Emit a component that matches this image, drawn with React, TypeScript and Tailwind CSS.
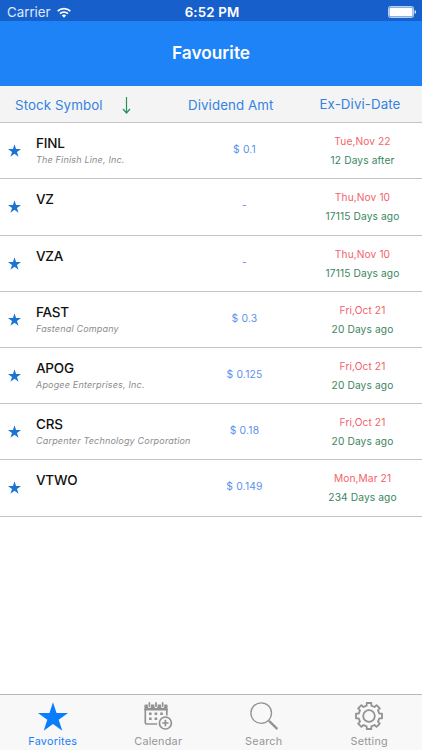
import type { ReactNode } from "react";

type Stock = {
  symbol: string;
  company?: string;
  amount: string;
  date: string;
  days: string;
};

const stocks: Stock[] = [
  { symbol: "FINL", company: "The Finish Line, Inc.", amount: "$ 0.1", date: "Tue,Nov 22", days: "12 Days after" },
  { symbol: "VZ", amount: "-", date: "Thu,Nov 10", days: "17115 Days ago" },
  { symbol: "VZA", amount: "-", date: "Thu,Nov 10", days: "17115 Days ago" },
  { symbol: "FAST", company: "Fastenal Company", amount: "$ 0.3", date: "Fri,Oct 21", days: "20 Days ago" },
  { symbol: "APOG", company: "Apogee Enterprises, Inc.", amount: "$ 0.125", date: "Fri,Oct 21", days: "20 Days ago" },
  { symbol: "CRS", company: "Carpenter Technology Corporation", amount: "$ 0.18", date: "Fri,Oct 21", days: "20 Days ago" },
  { symbol: "VTWO", amount: "$ 0.149", date: "Mon,Mar 21", days: "234 Days ago" },
];

function StarIcon({ className }: { className?: string }) {
  return (
    <svg viewBox="0 0 30 28.6" className={className} fill="currentColor">
      <path d="M15 0l3.54 10.9H30l-9.27 6.74 3.54 10.9L15 21.8l-9.27 6.74 3.54-10.9L0 10.9h11.46z" />
    </svg>
  );
}

function CalendarIcon() {
  return (
    <svg viewBox="0 0 30 30" className="h-[30px] w-[30px]" fill="none">
      <path d="M1.4 9.4V4.8q0-1.2 1.2-1.2h20.8q1.2 0 1.2 1.2v4.6z" fill="#929292" />
      <path d="M6.4 2.4v3M13 2.4v3M19.6 2.4v3" stroke="#f8f8f8" strokeWidth="3.2" strokeLinecap="round" />
      <path d="M6.4 1.8v3.4M13 1.8v3.4M19.6 1.8v3.4" stroke="#929292" strokeWidth="1.7" strokeLinecap="round" />
      <path d="M2.3 8v13.8q0 1.2 1.2 1.2h10.7M23.8 8v6.4" stroke="#929292" strokeWidth="1.7" />
      <path
        d="M6 12.8h2.6M11.6 12.8h2.6M17.2 12.8h2.6M6 17.8h2.6M11.6 17.8h2.6"
        stroke="#929292"
        strokeWidth="2.6"
      />
      <circle cx="22.4" cy="22" r="6" stroke="#929292" strokeWidth="1.7" fill="#f8f8f8" />
      <path d="M22.4 18.8v6.4M19.2 22h6.4" stroke="#929292" strokeWidth="1.7" />
    </svg>
  );
}

function SearchIcon() {
  return (
    <svg viewBox="0 0 30 30" className="h-[30px] w-[30px]" fill="none" stroke="#929292">
      <circle cx="12.2" cy="12.1" r="10.3" strokeWidth="1.3" />
      <path d="M19.5 19.4l1.6 1.6" strokeWidth="1.3" />
      <path d="M20.8 20.7l6.9 6.7" strokeWidth="2.4" strokeLinecap="round" />
    </svg>
  );
}

// One gear tooth spans 45 degrees; the outline is the same profile turned eight times.
const gearPoints = Array.from({ length: 8 }, (_, i) =>
  [
    [-13, 10.6],
    [-10, 13.2],
    [10, 13.2],
    [13, 10.6],
  ]
    .map(([deg, r]) => {
      const a = ((i * 45 + deg) * Math.PI) / 180;
      return `${(15 + r * Math.sin(a)).toFixed(2)},${(15 - r * Math.cos(a)).toFixed(2)}`;
    })
    .join(" ")
).join(" ");

function GearIcon() {
  return (
    <svg viewBox="0 0 30 30" className="h-[30px] w-[30px]" fill="none" stroke="#929292" strokeWidth="1.8">
      <polygon points={gearPoints} strokeLinejoin="round" />
      <circle cx="15" cy="15" r="5.8" />
    </svg>
  );
}

function StatusBar() {
  return (
    <div className="flex h-[21px] items-center bg-[#1760cc] text-[13.3px] text-white">
      <div className="flex flex-1 items-center pt-[3px] pl-[7px]">
        <span className="leading-[18px] text-[#dce9fb]">Carrier</span>
        <svg viewBox="0 0 14 11" className="ml-[6px] h-[11px] w-[14px]" fill="none" stroke="white" strokeWidth="1.8">
          <path d="M.7 4.1a9 9 0 0 1 12.6 0M3 6.7a5.8 5.8 0 0 1 8 0" />
          <path d="M7 10.7L4.8 8.5a3.2 3.2 0 0 1 4.4 0z" fill="white" stroke="none" />
        </svg>
      </div>
      <span className="pt-[3px] pl-px text-[13.3px] leading-[18px] font-semibold tracking-[0.15px]">6:52 PM</span>
      <div className="flex flex-1 justify-end pt-[3px] pr-[6px]">
        <svg viewBox="0 0 28 12" className="h-[12px] w-[28px]" fill="white">
          <rect x=".5" y=".5" width="25" height="11" rx="1.8" fill="none" stroke="#b7d0f5" />
          <rect x="1.4" y="1.4" width="23.2" height="9.2" rx="1" />
          <path d="M26.7 4q1.3.5 1.3 2t-1.3 2z" />
        </svg>
      </div>
    </div>
  );
}

function StockRow({ stock }: { stock: Stock }) {
  return (
    <li className="flex h-[56.2px] border-b border-[#c4c4c4]">
      <div className="w-[36px] shrink-0 pt-[21px] pl-[8px]">
        <StarIcon className="h-[13px] w-[13px] text-[#1975d1]" />
      </div>
      <div className="w-[159px] shrink-0 pt-[11px] whitespace-nowrap">
        <p className="text-[13.5px] leading-[18px] font-medium tracking-[-0.2px] text-[#111]">{stock.symbol}</p>
        {stock.company ? (
          <p className="pt-[1px] text-[9px] leading-[14px] tracking-[0.18px] text-[#8c8c8c] italic">{stock.company}</p>
        ) : null}
      </div>
      <p className="w-[99px] shrink-0 pt-[19px] text-center text-[10.3px] leading-[15px] tracking-[0.2px] text-[#5b91ec]">
        {stock.amount}
      </p>
      <div className="w-[137px] shrink-0 pt-[11px] text-center text-[10.2px] leading-[15px]">
        <p className="tracking-[0.1px] text-[#f3636b]">{stock.date}</p>
        <p className="pt-[4px] tracking-[0.12px] text-[#398660]">{stock.days}</p>
      </div>
    </li>
  );
}

function Tab({ label, active, children }: { label: string; active?: boolean; children: ReactNode }) {
  return (
    <div className="flex flex-1 flex-col items-center pt-[6px]">
      <div className="flex h-[31px] items-center">{children}</div>
      <span
        className={
          active
            ? "pt-[3px] text-[10.8px] leading-[16px] tracking-[0.25px] text-[#1581fb]"
            : "pt-[3px] text-[10.8px] leading-[16px] tracking-[0.25px] text-[#969696]"
        }
      >
        {label}
      </span>
    </div>
  );
}

export default function App() {
  return (
    <div className="flex h-[750px] w-[422px] flex-col overflow-hidden bg-white font-['Inter','Liberation_Sans',sans-serif]">
      <StatusBar />
      <header className="flex h-[65px] items-center justify-center bg-[#1e83f7] pb-[1px]">
        <h1 className="text-[17.3px] font-semibold text-white">Favourite</h1>
      </header>
      <div className="flex h-[37.3px] shrink-0 border-b border-[#c4c4c4] bg-[#f4f4f4] pt-[10px] text-[13.3px] leading-[18px] tracking-[0.1px] whitespace-nowrap text-[#3583df]">
        <div className="flex w-[188px] pl-[15px]">
          <span className="w-[107px]">Stock Symbol</span>
          <svg viewBox="0 0 9 17" className="mt-px h-[17px] w-[9px]" fill="none" stroke="#2c9158" strokeWidth="1.2">
            <path d="M4.5 0v16M1 12l3.5 4L8 12" />
          </svg>
        </div>
        <span className="w-[131.5px]">Dividend Amt</span>
        <span className="-mt-px">Ex-Divi-Date</span>
      </div>
      <ul className="flex-1">
        {stocks.map((stock) => (
          <StockRow key={stock.symbol} stock={stock} />
        ))}
      </ul>
      <nav className="flex h-[56px] shrink-0 border-t border-[#b7b7b7] bg-[#f8f8f8]">
        <Tab label="Favorites" active>
          <StarIcon className="h-[29px] w-[30px] text-[#087efd]" />
        </Tab>
        <Tab label="Calendar">
          <CalendarIcon />
        </Tab>
        <Tab label="Search">
          <SearchIcon />
        </Tab>
        <Tab label="Setting">
          <GearIcon />
        </Tab>
      </nav>
    </div>
  );
}
